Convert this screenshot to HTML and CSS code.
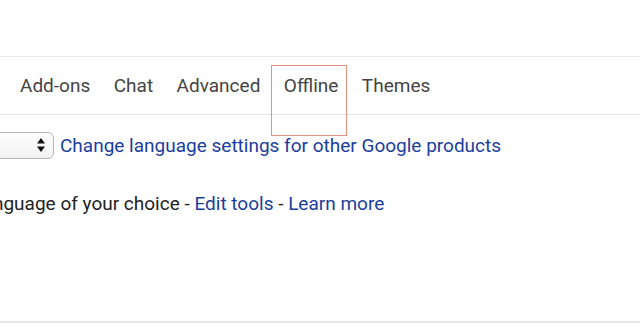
FILE: index.html
```html
<!DOCTYPE html>
<html lang="en">
<head>
<meta charset="utf-8">
<title>Settings</title>
<link rel="stylesheet" href="styles.css">
</head>
<body>
<div class="page">
  <div class="topbar"></div>
  <nav class="tabs">
    <span class="tab">Add-ons</span>
    <span class="tab">Chat</span>
    <span class="tab">Advanced</span>
    <span class="tab">Offline</span>
    <span class="tab">Themes</span>
  </nav>
  <div class="row lang-row">
    <div class="select">
      <svg class="arrows" width="10" height="16" viewBox="0 0 10 16"><path d="M5 1 L9 6.5 H1 Z M5 15 L9 9.5 H1 Z" fill="#111"/></svg>
    </div>
    <a class="link">Change language settings for other Google products</a>
  </div>
  <div class="row tools-row">
    <span class="clip">language of your choice - <a class="link">Edit tools</a> - <a class="link">Learn more</a></span>
  </div>
  <div class="spacer"></div>
  <div class="bottom-line"></div>
  <div class="highlight"></div>
</div>
</body>
</html>
```
FILE: styles.css
```css
html, body {
  margin: 0;
  padding: 0;
  background: #fff;
  overflow: hidden;
}
.page {
  position: relative;
  width: 640px;
  height: 333px;
  font-family: Roboto, "Liberation Sans", Arial, sans-serif;
  font-size: 19px;
  color: #222;
}
.topbar {
  height: 56px;
  border-bottom: 1px solid #e8e8e8;
}
.tabs {
  display: flex;
  align-items: center;
  height: 57px;
  padding-left: 8px;
  border-bottom: 1px solid #e4e4e4;
}
.tab {
  padding: 0 12px;
  color: #444;
  line-height: 20px;
}
.tab + .tab {
  margin-left: -0.5px;
}
.row {
  display: flex;
  align-items: center;
}
.lang-row {
  height: 30px;
  margin-top: 15px;
}
.select {
  width: 80px;
  height: 27px;
  margin-left: -26px;
  box-sizing: border-box;
  border: 1px solid #b5b5b5;
  border-radius: 6px;
  background: linear-gradient(#fdfdfd, #f2f2f2);
  display: flex;
  align-items: center;
  justify-content: flex-end;
  padding-right: 7px;
}
.link {
  color: #1a3e9c;
  text-decoration: none;
}
.lang-row .link {
  margin-left: 6px;
}
.tools-row {
  height: 30px;
  margin-top: 28px;
  overflow: hidden;
}
.clip {
  white-space: nowrap;
  margin-left: -22px;
}
.spacer {
  height: 103px;
}
.bottom-line {
  height: 2px;
  background: #e8e8e8;
}
.highlight {
  position: absolute;
  left: 271px;
  top: 65px;
  width: 76px;
  height: 71px;
  box-sizing: border-box;
  border: 1.5px solid #e8907f;
}
```
